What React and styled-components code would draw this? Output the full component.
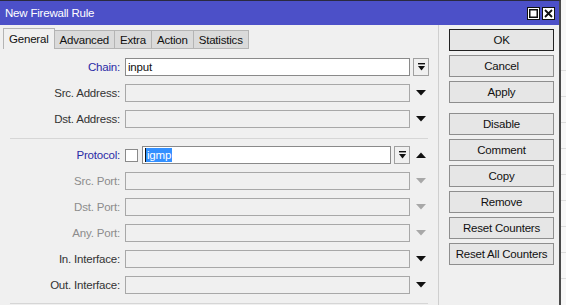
import React from "react";
import styled, { createGlobalStyle } from "styled-components";

const GlobalStyle = createGlobalStyle`
  body {
    margin: 0;
    background: #f4f4f4;
    font-family: "Liberation Sans", Arial, sans-serif;
    letter-spacing: -0.2px;
  }
`;

const Screen = styled.div`
  width: 566px;
  height: 305px;
  overflow: hidden;
  display: flex;
  background: #f7f7f7;
`;

const Window = styled.div`
  width: 559px;
  flex-shrink: 0;
  display: flex;
  flex-direction: column;
  background: #f0f0f0;
  border-top: 1px solid #2a2a40;
  border-right: 2px solid #4a4a4a;
`;

const Behind = styled.div`
  flex: 1;
  display: flex;
  flex-direction: column;
  padding-top: 70px;
  gap: 25px;

  span {
    display: block;
    border-top: 1px solid #dcdcdc;
  }
`;

const TitleBar = styled.div`
  height: 24px;
  background: #4c50c8;
  display: flex;
  align-items: center;
  justify-content: space-between;
  padding: 0 5px;
  color: #fff;
  font-size: 11.5px;
`;

const TitleButtons = styled.div`
  display: flex;
  gap: 2px;
  margin-right: -1px;
`;

const TitleButton = styled.div`
  width: 11px;
  height: 11px;
  background: #fff;
  border: 1px solid #111;
  display: flex;
  align-items: center;
  justify-content: center;
`;

const Body = styled.div`
  flex: 1;
  display: flex;
`;

const LeftPane = styled.div`
  width: 438px;
  border-right: 1px solid #cfcfcf;
  display: flex;
  flex-direction: column;
`;

const Tabs = styled.div`
  display: flex;
  padding: 3px 0 0 3px;
  height: 21px;
`;

const Tab = styled.div`
  padding: 0 ${(p) => p.$pad}px;
  display: flex;
  align-items: center;
  font-size: 11.5px;
  color: #111;
  background: ${(p) => (p.$active ? "#f0f0f0" : "#dadada")};
  border: 1px solid #b4b4b4;
  border-bottom: ${(p) => (p.$active ? "none" : "1px solid #b4b4b4")};
  margin-left: ${(p) => (p.$active ? 0 : -1)}px;
  margin-top: ${(p) => (p.$active ? 0 : 2)}px;
  height: ${(p) => (p.$active ? 20 : 17)}px;
`;

const Form = styled.div`
  padding-top: 5px;
  display: flex;
  flex-direction: column;
`;

const Row = styled.div`
  display: grid;
  grid-template-columns: 120px 285px 28px;
  column-gap: 5px;
  height: 26px;
  align-items: center;
`;

const Label = styled.div`
  text-align: right;
  font-size: 11.5px;
  color: ${(p) =>
    p.$tone === "blue" ? "#2a2aa6" : p.$tone === "gray" ? "#8c8c8c" : "#333"};
`;

const Field = styled.div`
  height: 16px;
  border: 1px solid ${(p) => (p.$active ? "#8a8a8a" : "#a8a8a8")};
  background: ${(p) => (p.$active ? "#fff" : "#f0f0f0")};
  font-size: 11.5px;
  color: #111;
  display: flex;
  align-items: center;
  padding-left: 2px;
`;

const ProtoWrap = styled.div`
  display: flex;
  align-items: center;
  gap: 4px;
`;

const CheckBox = styled.div`
  width: 11px;
  height: 11px;
  border: 1px solid #8a8a8a;
  background: #fff;
  flex-shrink: 0;
`;

const Selected = styled.span`
  background: #3390ff;
  color: #fff;
  padding: 0 1px;
  line-height: 14px;
  border-left: 1px solid #111;
`;

const ArrowCell = styled.div`
  display: flex;
  align-items: center;
  margin-left: -2px;
`;

const ArrowBox = styled.div`
  width: 14px;
  height: 16px;
  border: 1px solid #a0a0a0;
  background: #f0f0f0;
  display: flex;
  align-items: center;
  justify-content: center;
  margin-left: ${(p) => p.$shift || 0}px;
`;

const Plain = styled.div`
  width: 16px;
  display: flex;
  justify-content: center;
`;

const Divider = styled.div`
  height: 1px;
  background: #d6d6d6;
  margin: ${(p) => p.$m};
  margin-left: 10px;
  width: 418px;
`;

const RightPane = styled.div`
  flex: 1;
  padding: 4px 0 0 10px;
  display: flex;
  flex-direction: column;
  gap: 4px;
`;

const Button = styled.div`
  width: 103px;
  height: 20px;
  border: 1px solid ${(p) => (p.$default ? "#222" : "#8e8e8e")};
  background: #e6e6e6;
  display: flex;
  align-items: center;
  justify-content: center;
  font-size: 11.5px;
  color: #111;
  margin-top: ${(p) => (p.$gap ? 6 : 0)}px;
`;

const DownBar = ({ color = "#111" }) => (
  <svg width="9" height="9" viewBox="0 0 9 9">
    <rect x="1" y="0" width="7" height="1.4" fill={color} />
    <path d="M1 3 H8 L4.5 7.5 Z" fill={color} />
  </svg>
);

const Down = ({ color = "#111" }) => (
  <svg width="10" height="6" viewBox="0 0 10 6">
    <path d="M0 0 H10 L5 5.5 Z" fill={color} />
  </svg>
);

const Up = () => (
  <svg width="10" height="6" viewBox="0 0 10 6">
    <path d="M0 6 H10 L5 0.5 Z" fill="#111" />
  </svg>
);

const rowsTop = [
  { label: "Src. Address:", tone: "dark" },
  { label: "Dst. Address:", tone: "dark" },
];

const rowsBottom = [
  { label: "Src. Port:", tone: "gray" },
  { label: "Dst. Port:", tone: "gray" },
  { label: "Any. Port:", tone: "gray" },
  { label: "In. Interface:", tone: "dark" },
  { label: "Out. Interface:", tone: "dark" },
];

const tabs = [
  { name: "General", pad: 5, active: true },
  { name: "Advanced", pad: 5 },
  { name: "Extra", pad: 5 },
  { name: "Action", pad: 5 },
  { name: "Statistics", pad: 5 },
];

const buttons = [
  { name: "OK", def: true },
  { name: "Cancel" },
  { name: "Apply" },
  { name: "Disable", gap: true },
  { name: "Comment" },
  { name: "Copy" },
  { name: "Remove" },
  { name: "Reset Counters" },
  { name: "Reset All Counters" },
];

export default function App() {
  return (
    <>
      <GlobalStyle />
      <Screen>
        <Window>
          <TitleBar>
            <span>New Firewall Rule</span>
            <TitleButtons>
              <TitleButton>
                <svg width="9" height="9" viewBox="0 0 9 9">
                  <rect x="0.75" y="0.75" width="7.5" height="7.5" fill="none" stroke="#111" strokeWidth="1.5" />
                </svg>
              </TitleButton>
              <TitleButton>
                <svg width="9" height="9" viewBox="0 0 9 9">
                  <path d="M1 1 L8 8 M8 1 L1 8" stroke="#111" strokeWidth="1.8" />
                </svg>
              </TitleButton>
            </TitleButtons>
          </TitleBar>
          <Body>
            <LeftPane>
              <Tabs>
                {tabs.map((t) => (
                  <Tab key={t.name} $active={t.active} $pad={t.pad}>
                    {t.name}
                  </Tab>
                ))}
              </Tabs>
              <Form>
                <Row>
                  <Label $tone="blue">Chain:</Label>
                  <Field $active>input</Field>
                  <ArrowCell>
                    <ArrowBox>
                      <DownBar />
                    </ArrowBox>
                  </ArrowCell>
                </Row>
                {rowsTop.map((r) => (
                  <Row key={r.label}>
                    <Label $tone={r.tone}>{r.label}</Label>
                    <Field />
                    <ArrowCell>
                      <Plain>
                        <Down />
                      </Plain>
                    </ArrowCell>
                  </Row>
                ))}
                <Divider $m="6px 0 3px" />
                <Row>
                  <Label $tone="blue">Protocol:</Label>
                  <ProtoWrap>
                    <CheckBox />
                    <Field $active style={{ flex: 1 }}>
                      <Selected>igmp</Selected>
                    </Field>
                    <ArrowBox $shift={-1}>
                      <DownBar />
                    </ArrowBox>
                  </ProtoWrap>
                  <ArrowCell>
                    <Plain>
                      <Up />
                    </Plain>
                  </ArrowCell>
                </Row>
                {rowsBottom.map((r) => (
                  <Row key={r.label}>
                    <Label $tone={r.tone}>{r.label}</Label>
                    <Field />
                    <ArrowCell>
                      <Plain>
                        <Down color={r.tone === "gray" ? "#a8a8a8" : "#111"} />
                      </Plain>
                    </ArrowCell>
                  </Row>
                ))}
                <Divider $m="5px 0 0" />
              </Form>
            </LeftPane>
            <RightPane>
              {buttons.map((b) => (
                <Button key={b.name} $default={b.def} $gap={b.gap}>
                  {b.name}
                </Button>
              ))}
            </RightPane>
          </Body>
        </Window>
        <Behind>
          {Array.from({ length: 9 }).map((_, i) => (
            <span key={i} />
          ))}
        </Behind>
      </Screen>
    </>
  );
}
